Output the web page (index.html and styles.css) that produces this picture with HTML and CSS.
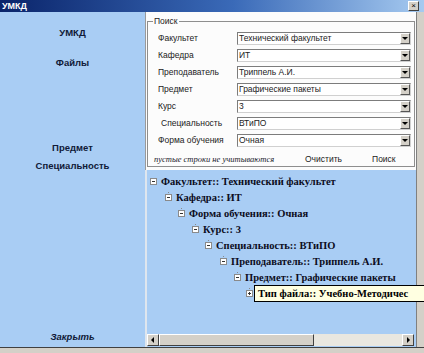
FILE: index.html
```html
<!DOCTYPE html>
<html>
<head>
  <meta charset="utf-8">
  <link rel="stylesheet" href="styles.css">
</head>
<body>
  <div class="window">
    <div class="titlebar">
      <span class="title">УМКД</span>
      <span class="close-btn">×</span>
    </div>

    <div class="main">
      <div class="side">
        <div class="side-label first">УМКД</div>
        <div class="side-label files">Файлы</div>
        <div class="side-label subject">Предмет</div>
        <div class="side-label spec">Специальность</div>
        <div class="side-label close">Закрыть</div>
      </div>

      <div class="content">
        <div class="search-panel">
          <div class="groupbox">
            <span class="legend">Поиск</span>
            <div class="form-grid">
              <div class="field-label">Факультет</div>
              <div class="combo"><span class="combo-text">Технический факультет</span><span class="combo-btn"></span></div>
              <div class="field-label">Кафедра</div>
              <div class="combo"><span class="combo-text">ИТ</span><span class="combo-btn"></span></div>
              <div class="field-label">Преподаватель</div>
              <div class="combo"><span class="combo-text">Триппель А.И.</span><span class="combo-btn"></span></div>
              <div class="field-label">Предмет</div>
              <div class="combo"><span class="combo-text">Графические пакеты</span><span class="combo-btn"></span></div>
              <div class="field-label">Курс</div>
              <div class="combo"><span class="combo-text">3</span><span class="combo-btn"></span></div>
              <div class="field-label shifted">Специальность</div>
              <div class="combo"><span class="combo-text">ВТиПО</span><span class="combo-btn"></span></div>
              <div class="field-label">Форма обучения</div>
              <div class="combo"><span class="combo-text">Очная</span><span class="combo-btn"></span></div>
            </div>
            <div class="search-footer">
              <span class="hint">пустые строки не учитываются</span>
              <span class="link-btn clear">Очистить</span>
              <span class="link-btn find">Поиск</span>
            </div>
          </div>
        </div>

        <div class="tree">
          <div class="tree-items">
            <div class="node lvl0"><span class="exp minus"></span>Факультет:: Технический факультет</div>
            <div class="node lvl1"><span class="exp minus line"></span>Кафедра:: ИТ</div>
            <div class="node lvl2"><span class="exp minus line"></span>Форма обучения:: Очная</div>
            <div class="node lvl3"><span class="exp minus line"></span>Курс:: 3</div>
            <div class="node lvl4"><span class="exp minus line"></span>Специальность:: ВТиПО</div>
            <div class="node lvl5"><span class="exp minus line"></span>Преподаватель:: Триппель А.И.</div>
            <div class="node lvl6"><span class="exp minus line"></span>Предмет:: Графические пакеты</div>
            <div class="node lvl7"><span class="exp plus line"></span></div>
          </div>
          <div class="tooltip">Тип файла:: Учебно-Методичес</div>
          <div class="hscroll">
            <span class="sb-btn left"></span>
            <span class="sb-thumb"></span>
            <span class="sb-track"></span>
            <span class="sb-btn right"></span>
          </div>
        </div>
      </div>

      <div class="frame-right"></div>
    </div>

    <div class="frame-bottom"></div>
  </div>
</body>
</html>
```

FILE: styles.css
```css
body {
  margin: 0;
  width: 424px;
  height: 353px;
  overflow: hidden;
  background-color: #d4d0c8;
  font-family: "Liberation Sans", Arial, sans-serif;
}

.window {
  display: flex;
  flex-direction: column;
  width: 424px;
  height: 353px;
}

.titlebar {
  display: flex;
  justify-content: space-between;
  align-items: center;
  height: 12px;
  padding: 0 5px 0 2px;
  background: linear-gradient(to right, #0a246a 0%, #3a6ab8 55%, #a6caf0 100%);
  color: #fff;
}

.title {
  font-size: 9px;
  font-weight: bold;
}

.close-btn {
  width: 9px;
  height: 8px;
  background-color: #d4d0c8;
  border: 1px solid #fff;
  border-right-color: #404040;
  border-bottom-color: #404040;
  color: #000;
  font-size: 8px;
  line-height: 8px;
  text-align: center;
}

.main {
  display: flex;
  height: 336px;
}

/* left column */
.side {
  display: flex;
  flex-direction: column;
  align-items: center;
  width: 145px;
  background-color: #a9cdf4;
  color: #101a38;
}

.side-label {
  font-size: 9.5px;
  font-weight: bold;
  line-height: 12px;
}

.side-label.first {
  margin-top: 15px;
}

.side-label.files {
  margin-top: 18px;
}

.side-label.subject {
  margin-top: 73px;
}

.side-label.spec {
  margin-top: 6px;
}

.side-label.close {
  margin-top: auto;
  margin-bottom: 4px;
  font-style: italic;
}

/* right column */
.content {
  display: flex;
  flex-direction: column;
  width: 271px;
}

.search-panel {
  height: 158px;
  padding: 9px 1px 0 1px;
  box-sizing: border-box;
  background-color: #fcfcfc;
  border-left: 1px solid #9a9a9a;
}

.groupbox {
  position: relative;
  height: 146px;
  box-sizing: border-box;
  border: 1px solid #8e8e8e;
  padding: 10px 3px 0 0;
}

.legend {
  position: absolute;
  top: -6px;
  left: 5px;
  padding: 0 1px;
  background-color: #fcfcfc;
  font-size: 8.5px;
  color: #222;
}

.form-grid {
  display: grid;
  grid-template-columns: 89px 174px;
  grid-auto-rows: 13px;
  row-gap: 4px;
  align-items: center;
}

.field-label {
  padding-left: 10px;
  font-size: 8.5px;
  color: #222;
}

.field-label.shifted {
  padding-left: 13px;
}

.combo {
  display: flex;
  height: 13px;
  box-sizing: border-box;
  border: 1px solid #7c7c7c;
  border-right-color: #d0d0d0;
  border-bottom-color: #d0d0d0;
  background-color: #fff;
}

.combo-text {
  flex: 1;
  padding-left: 1px;
  font-size: 8.5px;
  line-height: 11px;
  color: #222;
}

.combo-btn {
  position: relative;
  width: 10px;
  box-sizing: border-box;
  background-color: #d4d0c8;
  border: 1px solid #fff;
  border-right-color: #555;
  border-bottom-color: #555;
}

.combo-btn::after {
  content: "";
  position: absolute;
  left: 1px;
  top: 3px;
  border-left: 3px solid transparent;
  border-right: 3px solid transparent;
  border-top: 3px solid #000;
}

.search-footer {
  display: flex;
  align-items: center;
  height: 13px;
  margin-top: 6px;
  padding-left: 6px;
}

.hint {
  width: 151px;
  font-family: "Liberation Serif", "Times New Roman", serif;
  font-style: italic;
  font-size: 8.5px;
  color: #1a1a2a;
}

.link-btn {
  font-size: 8.5px;
  color: #222;
}

.find {
  margin-left: 30px;
}

/* tree */
.tree {
  position: relative;
  display: flex;
  flex-direction: column;
  flex: 1;
  background-color: #a9cdf4;
  border-left: 2px solid #dfe6ee;
}

.tree-items {
  flex: 1;
  padding-top: 4px;
  font-family: "Liberation Serif", "Times New Roman", serif;
  font-size: 10.5px;
  font-weight: bold;
  color: #0c0c1c;
}

.node {
  display: flex;
  align-items: center;
  height: 16px;
  white-space: nowrap;
}

.lvl0 { padding-left: 3px; }
.lvl1 { padding-left: 18px; }
.lvl2 { padding-left: 31px; }
.lvl3 { padding-left: 45px; }
.lvl4 { padding-left: 58px; }
.lvl5 { padding-left: 73px; }
.lvl6 { padding-left: 87px; }
.lvl7 { padding-left: 99px; }

.exp {
  position: relative;
  width: 7px;
  height: 7px;
  margin-right: 4px;
  box-sizing: border-box;
  border: 1px solid #8a8a8a;
  background-color: #fff;
}

.exp::after {
  content: "";
  position: absolute;
  left: 1px;
  top: 2px;
  width: 3px;
  height: 1px;
  background-color: #333;
}

.exp.plus::before {
  content: "";
  position: absolute;
  left: 2px;
  top: 1px;
  width: 1px;
  height: 3px;
  background-color: #333;
}

.exp.line {
  box-shadow: 0 -5px 0 -3px #8a8a8a;
}

.tooltip {
  position: absolute;
  left: 107px;
  top: 115px;
  width: 170px;
  height: 17px;
  box-sizing: border-box;
  padding-left: 3px;
  border: 1px solid #000;
  border-right: none;
  background-color: #ffffe1;
  font-family: "Liberation Serif", "Times New Roman", serif;
  font-size: 10.5px;
  font-weight: bold;
  line-height: 15px;
  white-space: nowrap;
  overflow: hidden;
  color: #000;
}

.hscroll {
  display: flex;
  height: 12px;
  margin-right: 2px;
  margin-bottom: 1px;
  background-color: #e9e7e0;
}

.sb-btn,
.sb-thumb {
  position: relative;
  box-sizing: border-box;
  background-color: #d4d0c8;
  border: 1px solid #fff;
  border-right-color: #404040;
  border-bottom-color: #404040;
}

.sb-btn {
  width: 12px;
}

.sb-thumb {
  width: 155px;
}

.sb-track {
  flex: 1;
}

.sb-btn::after {
  content: "";
  position: absolute;
  top: 2px;
  border-top: 3px solid transparent;
  border-bottom: 3px solid transparent;
}

.sb-btn.left::after {
  left: 3px;
  border-right: 3px solid #000;
}

.sb-btn.right::after {
  left: 4px;
  border-left: 3px solid #000;
}

.frame-right {
  width: 8px;
  background-color: #d4d0c8;
  border-left: 1px solid #808080;
  box-sizing: border-box;
}

.frame-bottom {
  height: 5px;
  background-color: #d4d0c8;
  border-top: 1px solid #404040;
}
```
